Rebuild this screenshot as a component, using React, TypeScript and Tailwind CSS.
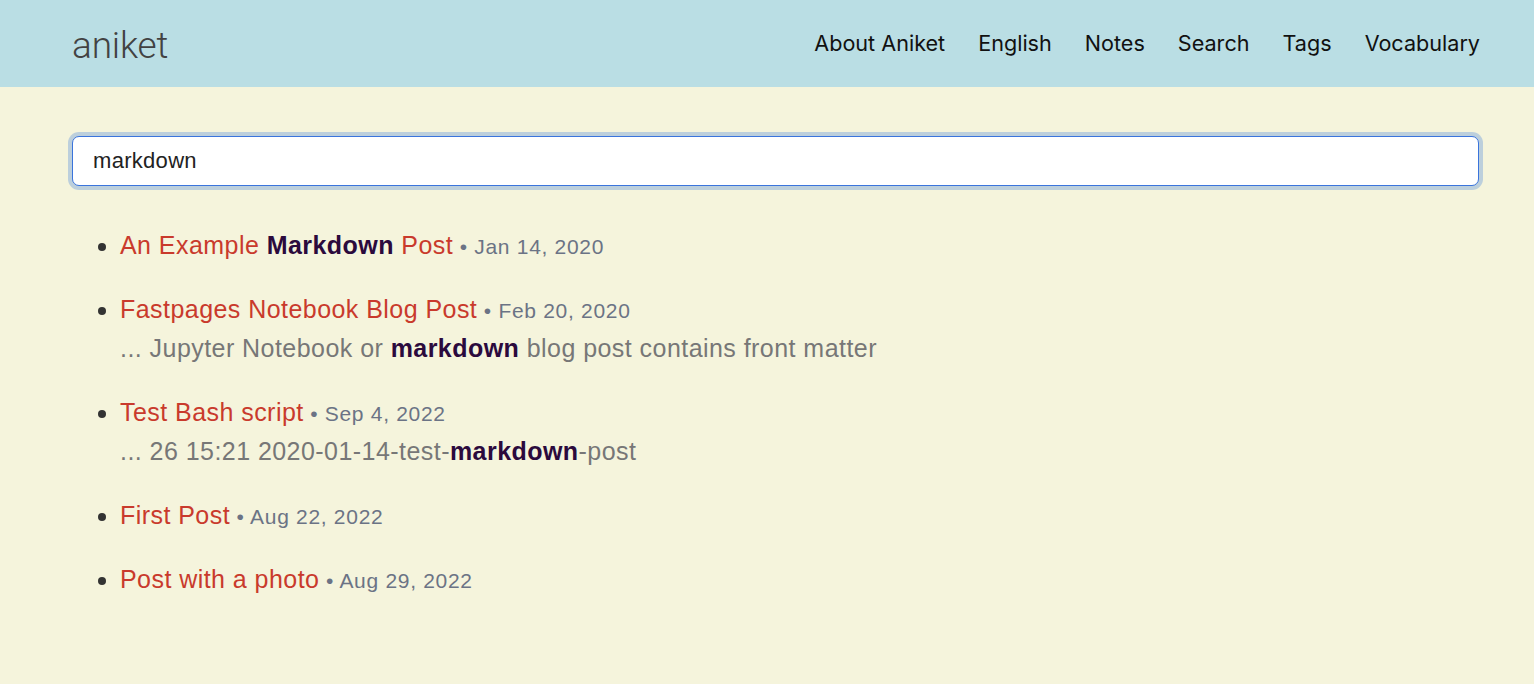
import React, { useState } from 'react';

type Post = {
  title: React.ReactNode;
  date: string;
  snippet?: React.ReactNode;
};

const Hit = ({ children }: { children: React.ReactNode }) => (
  <strong className="font-bold text-[#2b0a3d]">{children}</strong>
);

const posts: Post[] = [
  {
    title: (
      <>
        An Example <Hit>Markdown</Hit> Post
      </>
    ),
    date: 'Jan 14, 2020',
  },
  {
    title: 'Fastpages Notebook Blog Post',
    date: 'Feb 20, 2020',
    snippet: (
      <>
        ... Jupyter Notebook or <Hit>markdown</Hit> blog post contains front matter
      </>
    ),
  },
  {
    title: 'Test Bash script',
    date: 'Sep 4, 2022',
    snippet: (
      <>
        ... 26 15:21 2020-01-14-test-<Hit>markdown</Hit>-post
      </>
    ),
  },
  { title: 'First Post', date: 'Aug 22, 2022' },
  { title: 'Post with a photo', date: 'Aug 29, 2022' },
];

const navLinks = ['About Aniket', 'English', 'Notes', 'Search', 'Tags', 'Vocabulary'];

const App = () => {
  const [query, setQuery] = useState('markdown');

  return (
    <div className="min-h-[684px] bg-[#f5f4dc] font-['Liberation_Sans',Arial,sans-serif]">
      {/* Header */}
      <header className="h-[87px] bg-[#badee4]">
        <div className="flex h-full items-center justify-between pl-[72px] pr-[54px]">
          <a href="#" className="pt-[4px] font-['Roboto',sans-serif] text-[37px] font-light leading-none tracking-[-0.2px] text-[#424242]">
            aniket
          </a>
          <nav className="flex items-center gap-[33px] font-['Inter',sans-serif] text-[21.6px] text-[#111]">
            {navLinks.map((link) => (
              <a key={link} href="#" className="leading-none">
                {link}
              </a>
            ))}
          </nav>
        </div>
      </header>

      {/* Search */}
      <main className="pl-[72px] pr-[55px] pt-[49px]">
        <input
          value={query}
          onChange={(e) => setQuery(e.target.value)}
          autoFocus
          className="block h-[50px] w-full rounded-[7px] border border-[#3a74dc] bg-white px-[20px] text-[22px] tracking-[0.3px] text-[#222] caret-[#222] shadow-[0_0_0_4px_#bccfdc] outline-none"
        />

        <ul className="mt-[40px] list-disc pl-[48px] marker:text-[#333]">
          {posts.map((post, i) => (
            <li key={i} className="mb-[25px] text-[25px] leading-[39px] tracking-[0.45px]">
              <a href="#" className="text-[#c93a2c]">
                {post.title}
              </a>
              <span className="text-[21px] leading-none tracking-[0.7px] text-[#6b7385]"> • {post.date}</span>
              {post.snippet && <div className="text-[#777]">{post.snippet}</div>}
            </li>
          ))}
        </ul>
      </main>
    </div>
  );
};

export default App;
